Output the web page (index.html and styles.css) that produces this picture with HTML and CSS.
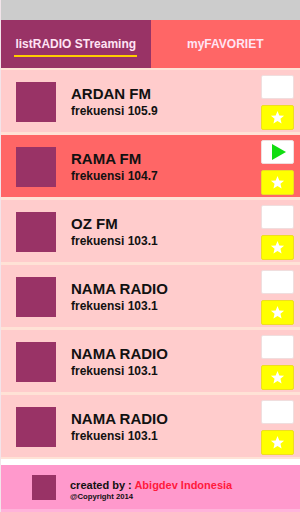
FILE: index.html
```html
<!DOCTYPE html>
<html lang="en">
<head>
  <meta charset="UTF-8">
  <meta name="viewport" content="width=device-width, initial-scale=1.0">
  <title>listRADIO STreaming</title>
  <link rel="stylesheet" href="styles.css">
</head>
<body>
  <div class="app">
    <div class="status-bar"></div>

    <div class="tabs">
      <div class="tab tab-active"><span class="tab-label">listRADIO STreaming</span></div>
      <div class="tab tab-fav"><span class="tab-label">myFAVORIET</span></div>
    </div>

    <div class="station-list">
      <div class="station">
        <div class="station-logo"></div>
        <div class="station-info">
          <div class="station-name">ARDAN FM</div>
          <div class="station-freq">frekuensi 105.9</div>
        </div>
        <div class="station-actions">
          <div class="btn-play"></div>
          <div class="btn-fav"><svg viewBox="0 0 24 24" width="15" height="15"><polygon points="12,1.5 14.9,8.6 22.5,9.1 16.7,14 18.5,21.5 12,17.4 5.5,21.5 7.3,14 1.5,9.1 9.1,8.6" fill="#fff"/></svg></div>
        </div>
      </div>

      <div class="station station-playing">
        <div class="station-logo"></div>
        <div class="station-info">
          <div class="station-name">RAMA FM</div>
          <div class="station-freq">frekuensi 104.7</div>
        </div>
        <div class="station-actions">
          <div class="btn-play"><svg viewBox="0 0 14 16" width="14" height="16"><polygon points="0,0 14,8 0,16" fill="#11dd11"/></svg></div>
          <div class="btn-fav"><svg viewBox="0 0 24 24" width="15" height="15"><polygon points="12,1.5 14.9,8.6 22.5,9.1 16.7,14 18.5,21.5 12,17.4 5.5,21.5 7.3,14 1.5,9.1 9.1,8.6" fill="#fff"/></svg></div>
        </div>
      </div>

      <div class="station">
        <div class="station-logo"></div>
        <div class="station-info">
          <div class="station-name">OZ FM</div>
          <div class="station-freq">frekuensi 103.1</div>
        </div>
        <div class="station-actions">
          <div class="btn-play"></div>
          <div class="btn-fav"><svg viewBox="0 0 24 24" width="15" height="15"><polygon points="12,1.5 14.9,8.6 22.5,9.1 16.7,14 18.5,21.5 12,17.4 5.5,21.5 7.3,14 1.5,9.1 9.1,8.6" fill="#fff"/></svg></div>
        </div>
      </div>

      <div class="station">
        <div class="station-logo"></div>
        <div class="station-info">
          <div class="station-name">NAMA RADIO</div>
          <div class="station-freq">frekuensi 103.1</div>
        </div>
        <div class="station-actions">
          <div class="btn-play"></div>
          <div class="btn-fav"><svg viewBox="0 0 24 24" width="15" height="15"><polygon points="12,1.5 14.9,8.6 22.5,9.1 16.7,14 18.5,21.5 12,17.4 5.5,21.5 7.3,14 1.5,9.1 9.1,8.6" fill="#fff"/></svg></div>
        </div>
      </div>

      <div class="station">
        <div class="station-logo"></div>
        <div class="station-info">
          <div class="station-name">NAMA RADIO</div>
          <div class="station-freq">frekuensi 103.1</div>
        </div>
        <div class="station-actions">
          <div class="btn-play"></div>
          <div class="btn-fav"><svg viewBox="0 0 24 24" width="15" height="15"><polygon points="12,1.5 14.9,8.6 22.5,9.1 16.7,14 18.5,21.5 12,17.4 5.5,21.5 7.3,14 1.5,9.1 9.1,8.6" fill="#fff"/></svg></div>
        </div>
      </div>

      <div class="station">
        <div class="station-logo"></div>
        <div class="station-info">
          <div class="station-name">NAMA RADIO</div>
          <div class="station-freq">frekuensi 103.1</div>
        </div>
        <div class="station-actions">
          <div class="btn-play"></div>
          <div class="btn-fav"><svg viewBox="0 0 24 24" width="15" height="15"><polygon points="12,1.5 14.9,8.6 22.5,9.1 16.7,14 18.5,21.5 12,17.4 5.5,21.5 7.3,14 1.5,9.1 9.1,8.6" fill="#fff"/></svg></div>
        </div>
      </div>
    </div>

    <div class="footer">
      <div class="footer-logo"></div>
      <div class="footer-text">
        <div class="footer-credit">created by : <span class="footer-dev">Abigdev Indonesia</span></div>
        <div class="footer-copy">@Copyright 2014</div>
      </div>
    </div>
  </div>
</body>
</html>
```

FILE: styles.css
```css
* {
  box-sizing: border-box;
  margin: 0;
  padding: 0;
}

body {
  width: 300px;
  height: 512px;
  overflow: hidden;
  background: #fff;
  font-family: "Liberation Sans", Arial, sans-serif;
  font-weight: bold;
}

.app {
  display: flex;
  flex-direction: column;
  height: 512px;
  border-left: 1px solid #f2e4ea;
}

.status-bar {
  height: 20px;
  background: #cccccc;
}

/* tabs */
.tabs {
  display: flex;
  height: 48px;
}

.tab {
  flex: 1;
  display: flex;
  justify-content: center;
  align-items: center;
  font-size: 12px;
  color: #ffe4f4;
}

.tab-active {
  background: #993366;
}

.tab-fav {
  background: #ff6666;
}

.tab-label {
  line-height: 14px;
  margin-top: 5px;
  padding: 0 1px 4px;
  border-bottom: 2px solid transparent;
}

.tab-active .tab-label {
  border-bottom-color: #ffcc00;
}

/* station list */
.station-list {
  display: flex;
  flex-direction: column;
  gap: 3px;
  padding: 2px 0;
  background: #ffe2d6;
}

.station {
  display: flex;
  height: 62px;
  padding: 0 6px 0 15px;
  background: #ffcccc;
}

.station-playing {
  background: #ff6666;
}

.station-logo {
  width: 40px;
  height: 40px;
  margin-top: 12px;
  background: #993366;
}

.station-info {
  flex: 1;
  padding: 15px 0 0 15px;
  color: #111;
}

.station-name {
  font-size: 15px;
  line-height: 18px;
}

.station-freq {
  font-size: 12px;
  line-height: 16px;
}

.station-actions {
  display: flex;
  flex-direction: column;
  gap: 6px;
  width: 33px;
  padding-top: 5px;
}

.btn-play,
.btn-fav {
  display: flex;
  justify-content: center;
  align-items: center;
  border-radius: 2px;
}

.btn-play {
  height: 24px;
  background: #fff;
  border: 1px solid #f0dede;
}

.btn-play svg {
  margin-left: 3px;
}

.btn-fav {
  height: 25px;
  background: #ffff00;
  border: 1px solid #eedd22;
}

/* footer */
.footer {
  flex: 1;
  display: flex;
  margin-top: 6px;
  padding: 10px 0 0 31px;
  background: #ff99cc;
  border-bottom: 3px solid #ffb3d9;
}

.footer-logo {
  width: 24px;
  height: 25px;
  background: #993366;
}

.footer-text {
  padding: 4px 0 0 14px;
  color: #111;
}

.footer-credit {
  font-size: 11px;
  line-height: 13px;
}

.footer-dev {
  color: #ff1a3c;
}

.footer-copy {
  font-size: 7.7px;
  line-height: 10px;
}
```
